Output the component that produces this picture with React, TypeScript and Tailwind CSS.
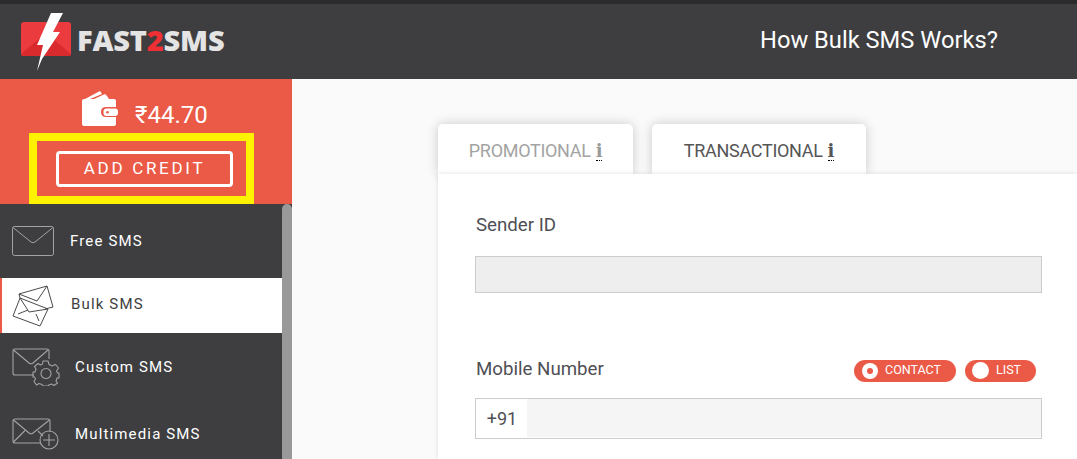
import React from "react";

const stroke = "#a3a3a3";

function FreeIcon() {
  return (
    <svg width="42" height="30" viewBox="0 0 42 30" fill="none" stroke={stroke} strokeWidth="1" strokeLinejoin="round">
      <rect x="0.500" y="0.500" width="41" height="29" rx="2" />
      <path d="M1 1.500 L19 16 Q21 17.500 23 16 L41 1.500" />
    </svg>
  );
}

function BulkIcon() {
  return (
    <svg width="42" height="42" viewBox="0 0 42 42" fill="none" stroke="#4a4a4a" strokeWidth="1" strokeLinejoin="round">
      <path d="M7 9 L35 1 L41 22 L33 24" />
      <path d="M7 9 L25 16 L35 1" />
      <path d="M7 9 L8 13" />
      <path d="M8 13 L36 24 L28 41 L1 31 Z" />
      <path d="M8 13 L17 27 L36 24" />
      <path d="M6 29 L16 25" />
      <path d="M24 29 L27 36" />
    </svg>
  );
}

function CustomIcon() {
  return (
    <svg width="48" height="38" viewBox="0 0 48 38" fill="none" stroke={stroke} strokeWidth="1.100" strokeLinejoin="round">
      <path d="M22 27 H3 Q1 27 1 25 V3 Q1 1 3 1 H35 Q37 1 37 3 V11" />
      <path d="M1.500 2 L17 15 Q19 16.500 21 15 L36 2" />
      <path d="M31 13 H36 L37 16.500 L40 18 L43.500 16.500 L46.500 20 L44.500 23 L45.500 25 H47 V30 H45 L44 33 L45.500 35 L42 37.500 L39.500 36 L37 37 L36 38 H31 L30 36.500 L27 35.500 L24.500 37 L22 33.500 L23.500 31 L22.500 29 H21 V24 H23 L24 21 L22.500 18.500 L26 15.500 L28.500 17 L30.500 16 Z" />
      <circle cx="34" cy="25.500" r="5" />
    </svg>
  );
}

function MediaIcon() {
  return (
    <svg width="48" height="32" viewBox="0 0 48 32" fill="none" stroke={stroke} strokeWidth="1.100" strokeLinejoin="round">
      <path d="M28 25 H3 Q1 25 1 23 V3 Q1 1 3 1 H36 Q38 1 38 3 V14" />
      <path d="M1.500 2 L17 15 Q19 16.500 21 15 L37.500 2" />
      <path d="M1.500 24 L13 12.500 M26 13 L31 18" />
      <circle cx="37" cy="22" r="9" />
      <path d="M37 16 V28 M31 22 H43" />
    </svg>
  );
}

function Wallet() {
  return (
    <svg width="37" height="36" viewBox="0 0 37 36" fill="none" className="mt-[4px]">
      <path d="M4 9 L19 1 L21 4 L9 9 Z M13 9 L24 4 L26 6 L28 9 Z" fill="#fff" />
      <path d="M1 11 Q1 9 3 9 H33 Q35 9 35 11 V17 H25 Q20 17 20 22 Q20 27 25 27 H35 V34 Q35 36 33 36 H3 Q1 36 1 34 Z" fill="#fff" />
      <rect x="22.500" y="18.500" width="14.500" height="7.500" rx="3" fill="#fff" />
      <circle cx="26.500" cy="22.200" r="1.300" fill="#ea5a47" />
    </svg>
  );
}

function Logo() {
  return (
    <div className="flex items-center">
      <svg width="50" height="60" viewBox="0 0 50 60">
        <rect x="0" y="10" width="50" height="34" rx="3" fill="#ec3b3f" />
        <path d="M0 42 L19 26 L31 26 L50 42 L49 44 H1 Z" fill="#d92a2e" />
        <path d="M30 1 L42 1 L32 20 L39 20 L21 47 L16 59 L22 33 L16 33 Z" fill="#fff" />
      </svg>
      <span className="ml-[6px] -mt-[5px] font-['Open_Sans',sans-serif] text-[29px] font-extrabold leading-none tracking-[-0.2px] text-[#e4e4e4]">
        FAST<span className="text-[#ee2f33]">2</span>SMS
      </span>
    </div>
  );
}

function MenuRow({ icon, label, active, iconW, h, textClass }: { icon: React.ReactNode; label: string; active?: boolean; iconW: string; h: string; textClass: string }) {
  return (
    <div className={`flex items-center ${h} ${active ? "border-l-2 border-[#ea5a47] bg-white pl-[10px] text-[#3e3e40]" : "pl-[12px] text-white"}`}>
      <div className={`flex shrink-0 ${iconW}`}>{icon}</div>
      <span className={`text-[15px] leading-none tracking-[1.15px] ${textClass}`}>{label}</span>
    </div>
  );
}

function InfoMark({ color }: { color: string }) {
  return (
    <span className={`ml-[5px] mt-[2px] border-b border-dotted border-black font-['DejaVu_Serif',serif] text-[18px] font-bold leading-[18px] ${color}`}>i</span>
  );
}

export default function App() {
  return (
    <div className="flex h-[459px] w-[1077px] flex-col overflow-hidden bg-[#fafafa] font-['Roboto',sans-serif]">
      <header className="flex h-[79px] shrink-0 items-center border-t-[4px] border-[#2b2b2b] bg-[#3e3e40] pl-[21px]">
        <div className="w-[739px]">
          <Logo />
        </div>
        <span className="-mt-[2px] text-[23.7px] text-white">How Bulk SMS Works?</span>
      </header>
      <div className="flex min-h-0 flex-1">
        <aside className="flex w-[292px] shrink-0 flex-col">
          <div className="flex h-[125px] shrink-0 flex-col bg-[#ea5a47] pl-[29px]">
            <div className="flex h-[54px] items-center pl-[52px]">
              <Wallet />
              <span className="ml-[17px] mt-[18px] text-[24px] leading-none text-white">₹44.70</span>
            </div>
            <div className="flex h-[71px] w-[225px] items-center border-[8px] border-[#fff200] pl-[19px]">
              <div className="flex h-[36px] w-[177px] items-center justify-center rounded-[4px] border-[3px] border-white text-[17px] tracking-[2.7px] text-white">
                ADD CREDIT
              </div>
            </div>
          </div>
          <div className="flex min-h-0 flex-1 bg-[#3e3e40]">
            <nav className="min-w-0 flex-1">
              <MenuRow icon={<FreeIcon />} label="Free SMS" iconW="w-[58px]" h="h-[74px]" textClass="mt-px" />
              <MenuRow icon={<BulkIcon />} label="Bulk SMS" active iconW="w-[59px]" h="h-[55px]" textClass="-mt-[3px]" />
              <MenuRow icon={<CustomIcon />} label="Custom SMS" iconW="w-[63px]" h="h-[67px]" textClass="mt-[2px]" />
              <MenuRow icon={<MediaIcon />} label="Multimedia SMS" iconW="w-[63px]" h="h-[67px]" textClass="mt-[2px]" />
            </nav>
            <div className="w-[10px] shrink-0 rounded-t-[5px] bg-[#999999]" />
          </div>
        </aside>
        <main className="flex min-w-0 flex-1 flex-col pl-[146px] pt-[45px]">
          <div className="flex h-[50px] shrink-0 gap-[19px]">
            <div className="flex w-[195px] items-center justify-center rounded-t-[5px] bg-white pt-[3px] text-[18px] tracking-[-0.3px] text-[#a3a3a3] shadow-[0_0_12px_rgba(0,0,0,0.2)]">
              PROMOTIONAL
              <InfoMark color="text-[#9a9a9a]" />
            </div>
            <div className="flex w-[214px] items-center justify-center rounded-t-[5px] bg-white pt-[3px] text-[18px] tracking-[-0.3px] text-[#555555] shadow-[0_0_12px_rgba(0,0,0,0.2)]">
              TRANSACTIONAL
              <InfoMark color="text-[#555555]" />
            </div>
          </div>
          <section className="relative flex-1 bg-white pl-[37px] pr-[35px] shadow-[0_0_5px_rgba(0,0,0,0.12)]">
            <div className="mt-[39px] pl-px text-[18.7px] leading-[24px] text-[#4f4f55]">Sender ID</div>
            <div className="mt-[19px] h-[37px] border border-[#cccccc] bg-[#eeeeee]" />
            <div className="mt-[63px] flex h-[24px] items-center justify-between pl-px pr-[6px]">
              <span className="mt-[1px] text-[18.7px] leading-[24px] text-[#4f4f55]">Mobile Number</span>
              <div className="mt-[5px] flex gap-[9px]">
                <div className="flex h-[22px] w-[102px] items-center rounded-full bg-[#ea5a47] pl-[8px] text-[12.500px] text-white">
                  <span className="flex h-[16px] w-[16px] items-center justify-center rounded-full bg-white">
                    <span className="h-[6px] w-[6px] rounded-full bg-[#ea5a47]" />
                  </span>
                  <span className="ml-[7px]">CONTACT</span>
                </div>
                <div className="flex h-[22px] w-[71px] items-center rounded-full bg-[#ea5a47] pl-[7px] text-[12.500px] text-white">
                  <span className="h-[17px] w-[17px] rounded-full bg-white" />
                  <span className="ml-[7px]">LIST</span>
                </div>
              </div>
            </div>
            <div className="mt-[18px] flex h-[41px] border border-[#cccccc] bg-white">
              <span className="flex w-[51px] items-center justify-center pb-[1px] pl-px text-[18px] text-[#4f4f55]">+91</span>
              <div className="mb-px flex-1 bg-[#f5f5f5]" />
            </div>
          </section>
        </main>
      </div>
    </div>
  );
}
